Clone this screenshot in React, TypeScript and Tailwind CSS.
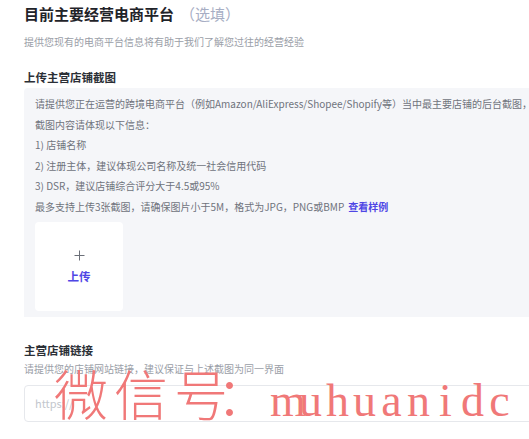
import React from "react";

const guideLines = [
  "请提供您正在运营的跨境电商平台（例如Amazon/AliExpress/Shopee/Shopify等）当中最主要店铺的后台截图，",
  "截图内容请体现以下信息：",
  "1) 店铺名称",
  "2) 注册主体，建议体现公司名称及统一社会信用代码",
  "3) DSR，建议店铺综合评分大于4.5或95%",
];

function UploadTile() {
  return (
    <div className="w-[88px] h-[89px] bg-white rounded-[4px] flex flex-col items-center pt-[28px]">
      <svg width="11" height="11" viewBox="0 0 11 11" className="text-[#6b6f78]">
        <path d="M5.5 0.5v10M0.5 5.5h10" stroke="currentColor" strokeWidth="1" fill="none" />
      </svg>
      <span className="mt-[7px] text-[11.5px] leading-[16px] font-bold text-[#4f46e5]">上传</span>
    </div>
  );
}

export default function App() {
  return (
    <div className="relative w-[529px] h-[439px] overflow-hidden bg-white font-['Noto_Sans_CJK_SC',sans-serif]">
      <div className="w-[560px] pl-6 pt-[2px]">
        {/* 标题 */}
        <h1 className="text-[15px] leading-[24px] font-bold text-[#1f2329] whitespace-nowrap">
          目前主要经营电商平台
          <span className="ml-[6px] font-normal text-[#a7aec4]">（选填）</span>
        </h1>
        <p className="mt-[8px] text-[10px] leading-[16px] text-[#9a9ea7]">
          提供您现有的电商平台信息将有助于我们了解您过往的经营经验
        </p>

        {/* 上传主营店铺截图 */}
        <h2 className="mt-[18px] text-[11.5px] leading-[18px] font-bold text-[#2b2f36]">上传主营店铺截图</h2>
        <div className="mt-[2px] bg-[#f5f6f9] pl-[11px] pt-[6px] pb-[6px] rounded-tl-[4px]">
          <div className="text-[10px] leading-[20.5px] text-[#6f737c] whitespace-nowrap">
            {guideLines.map((line) => (
              <div key={line}>{line}</div>
            ))}
            <div>
              最多支持上传3张截图，请确保图片小于5M，格式为JPG，PNG或BMP
              <span className="ml-[4px] font-bold text-[#4f46e5]">查看样例</span>
            </div>
          </div>
          <div className="mt-[5px]">
            <UploadTile />
          </div>
        </div>

        {/* 主营店铺链接 */}
        <h2 className="mt-[24px] text-[11.5px] leading-[18px] font-bold text-[#2b2f36]">主营店铺链接</h2>
        <p className="mt-[2px] text-[10px] leading-[16px] text-[#9a9ea7]">
          请提供您的店铺网站链接，建议保证与上述截图为同一界面
        </p>
        <div className="mt-[8px] h-[37px] border border-[#e6e8ec] rounded-[4px] flex items-center pl-[10px]">
          <span className="text-[11px] text-[#c3c7cd]">https://</span>
        </div>
      </div>

      {/* watermark */}
      <div className="absolute left-[54px] top-[366px] flex items-baseline text-[#f07878] pointer-events-none whitespace-nowrap">
        <span className="text-[54px] leading-none font-light tracking-[6px]">微信号</span>
        <span className="-ml-[18px] text-[54px] leading-none font-light">：</span>
        <span className="ml-[0px] flex font-['Liberation_Serif',serif] text-[46px] leading-none">
          {"muhuanidc".split("").map((ch, i) => (
            <span key={i} className="inline-block w-[27px] text-center">
              {ch}
            </span>
          ))}
        </span>
      </div>
    </div>
  );
}
